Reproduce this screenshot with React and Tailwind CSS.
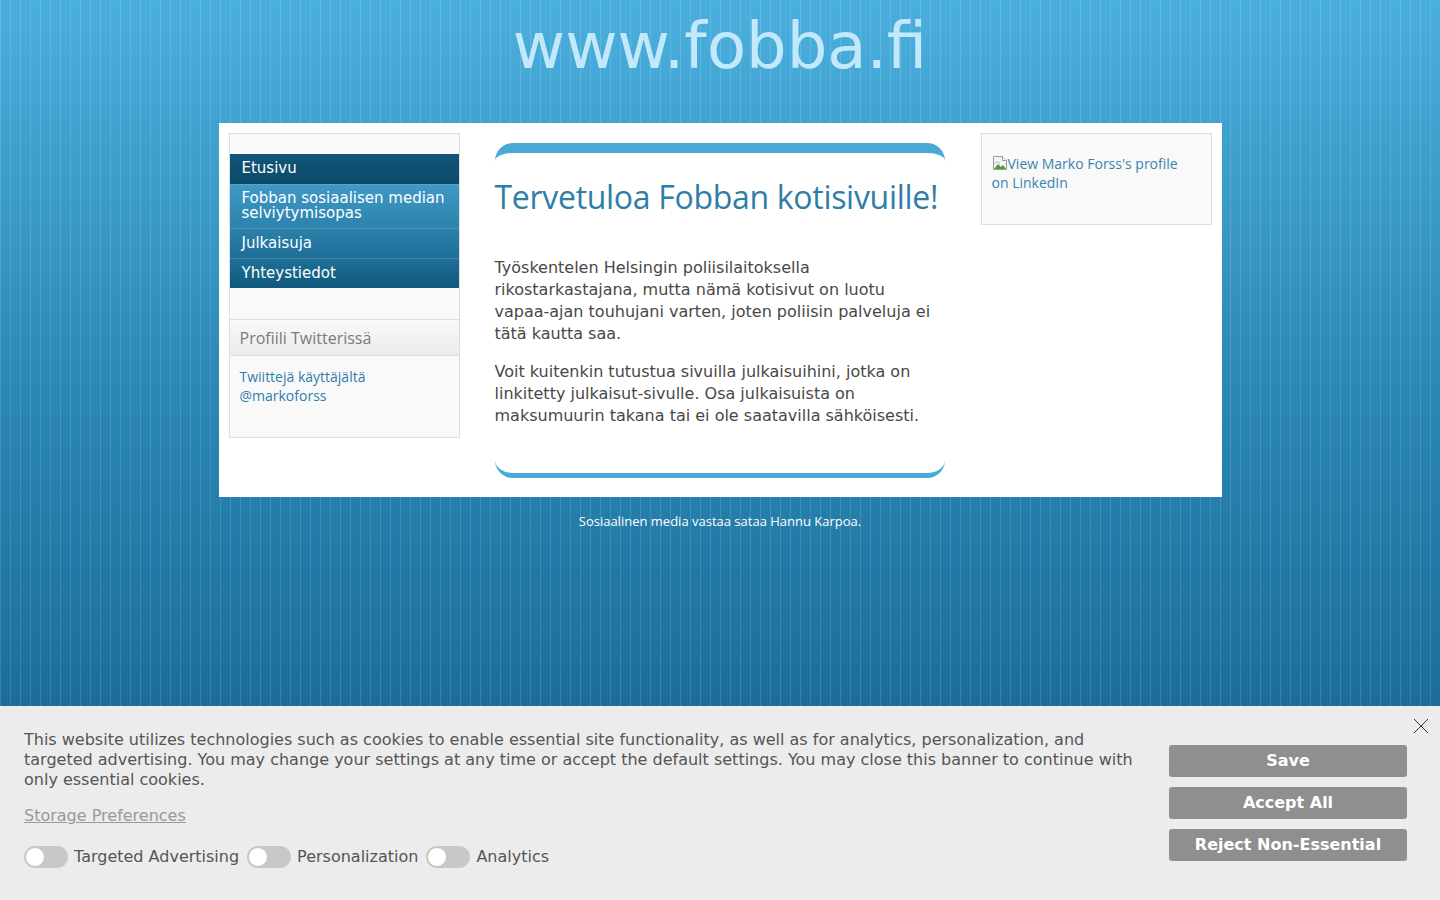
import { useState } from 'react'

const NAV = [
  { label: 'Etusivu', active: true },
  { label: 'Fobban sosiaalisen median selviytymisopas' },
  { label: 'Julkaisuja' },
  { label: 'Yhteystiedot' },
]

function BrokenImage() {
  return (
    <svg width="16" height="16" viewBox="0 0 16 16" className="inline-block align-[-2px]">
      <path d="M1.5 1.5h9l4 4v9h-13z" fill="#f4f4f4" stroke="#9a9a9a" />
      <path d="M10.5 1.5v4h4" fill="#fff" stroke="#9a9a9a" />
      <path d="M2 14l4-5 3 3 2-2 3 4z" fill="#4f9a3a" />
      <path d="M2 9.5l3-3 3 2" fill="none" stroke="#8fb4d8" />
    </svg>
  )
}

function Toggle({ label }) {
  const [on, setOn] = useState(false)
  return (
    <label className="flex items-center gap-[6px] cursor-pointer select-none">
      <button
        type="button"
        onClick={() => setOn((v) => !v)}
        className={`relative w-[44px] h-[22px] rounded-full ${on ? 'bg-[#6a9cc0]' : 'bg-[#c8c8c8]'}`}
      >
        <span
          className={`absolute top-[1px] w-[20px] h-[20px] rounded-full bg-white border border-[#c4c4c4] ${on ? 'left-[23px]' : 'left-[1px]'}`}
        />
      </button>
      <span>{label}</span>
    </label>
  )
}

export default function App() {
  const [banner, setBanner] = useState(true)

  return (
    <div className="min-h-screen [background:repeating-linear-gradient(90deg,rgba(255,255,255,0.13)_0_1px,transparent_1px_10px),linear-gradient(180deg,#4bafdd_0%,#2a86b4_45%,#135e86_100%)] font-['Open_Sans',sans-serif]">
      <header className="h-[123px] flex justify-center pt-[8px]">
        <h1 className="font-['DejaVu_Sans',sans-serif] text-[64px] leading-[76px] text-[#c2e9fb]">www.fobba.fi</h1>
      </header>

      <div className="w-[1003px] mx-auto bg-white p-[10px] flex items-start">
        <aside className="w-[231px] shrink-0 border border-[#dedede] bg-[#f9f9f9]">
          <nav className="pt-[20px] font-['DejaVu_Sans',sans-serif] text-[15px] text-white">
            {NAV.map((item, i) => (
              <a
                key={item.label}
                href="#"
                className={`block px-[12px] ${i > 0 ? 'border-t border-white/25' : ''} ${
                  item.active
                    ? 'bg-[linear-gradient(#115679,#0b4968)] h-[30px] leading-[28px]'
                    : i === 1
                    ? 'bg-[linear-gradient(#3f99c4,#2c83ad)] pt-[6px] pb-[7px] leading-[15px]'
                    : i === 2
                    ? 'bg-[linear-gradient(#2b81ab,#1d6e97)] h-[30px] leading-[28px]'
                    : 'bg-[linear-gradient(#1e7099,#10577c)] h-[30px] leading-[28px]'
                }`}
              >
                {item.label}
              </a>
            ))}
          </nav>
          <div className="h-[31px]" />
          <div className="border-t border-b border-[#dedede] bg-[linear-gradient(#f8f8f8,#ececec)] h-[37px] px-[10px] flex items-center text-[16px] text-[#7a7a7a]">
            Profiili Twitterissä
          </div>
          <div className="px-[10px] pt-[11px] h-[81px] text-[14px] leading-[19px] text-[#2f7dab]">
            <a href="#">Twiittejä käyttäjältä<br />@markoforss</a>
          </div>
        </aside>

        <main className="w-[450px] shrink-0 ml-[35px] mt-[10px] mb-[9px] rounded-[18px] border-t-[10px] border-b-[5px] border-[#4aaad6] pt-[23px] pb-[46px]">
          <h2 className="font-['Open_Sans',sans-serif] text-[32px] leading-[42px] text-[#2e7ea8] tracking-[-0.3px]">
            Tervetuloa Fobban kotisivuille!
          </h2>
          <div className="mt-[39px] font-['DejaVu_Sans',sans-serif] text-[16px] leading-[22px] text-[#484848]">
            <p className="mb-[16px]">
              Työskentelen Helsingin poliisilaitoksella rikostarkastajana, mutta nämä kotisivut on luotu vapaa-ajan touhujani varten, joten poliisin palveluja ei tätä kautta saa.
            </p>
            <p>
              Voit kuitenkin tutustua sivuilla julkaisuihini, jotka on linkitetty julkaisut-sivulle. Osa julkaisuista on maksumuurin takana tai ei ole saatavilla sähköisesti.
            </p>
          </div>
        </main>

        <aside className="w-[231px] shrink-0 ml-[36px] h-[92px] border border-[#dedede] bg-[#f9f9f9] pl-[10px] pr-[24px] pt-[20px] text-[14px] leading-[19px] text-[#3a84ad]">
          <a href="#">
            <BrokenImage />View Marko Forss's profile on LinkedIn
          </a>
        </aside>
      </div>

      <p className="mt-[14px] text-center text-[13px] leading-[20px] text-white">
        Sosiaalinen media vastaa sataa Hannu Karpoa.
      </p>

      {banner && (
        <div className="fixed inset-x-0 bottom-0 h-[194px] bg-[#ececec] font-['DejaVu_Sans',sans-serif] text-[16px] text-[#555]">
          <button
            type="button"
            onClick={() => setBanner(false)}
            className="absolute right-[11px] top-[12px] w-[16px] h-[16px]"
          >
            <svg viewBox="0 0 16 16" width="16" height="16">
              <path d="M1 1l14 14M15 1L1 15" stroke="#333" strokeWidth="1" />
            </svg>
          </button>
          <div className="flex pl-[24px] pr-[33px] pt-[24px]">
            <div className="flex-1 pr-[30px]">
              <p className="leading-[20px]">
                This website utilizes technologies such as cookies to enable essential site functionality, as well as for analytics, personalization, and targeted advertising. You may change your settings at any time or accept the default settings. You may close this banner to continue with only essential cookies.
              </p>
              <a href="#" className="inline-block mt-[16px] leading-[20px] text-[#999] underline">
                Storage Preferences
              </a>
              <div className="flex items-center gap-[8px] mt-[17px]">
                <Toggle label="Targeted Advertising" />
                <Toggle label="Personalization" />
                <Toggle label="Analytics" />
              </div>
            </div>
            <div className="w-[238px] shrink-0 flex flex-col gap-[10px] pt-[15px]">
              {['Save', 'Accept All', 'Reject Non-Essential'].map((t) => (
                <button
                  key={t}
                  type="button"
                  className="h-[32px] rounded-[3px] bg-[#8f8f8f] text-white font-bold text-[16px]"
                >
                  {t}
                </button>
              ))}
            </div>
          </div>
        </div>
      )}
    </div>
  )
}
